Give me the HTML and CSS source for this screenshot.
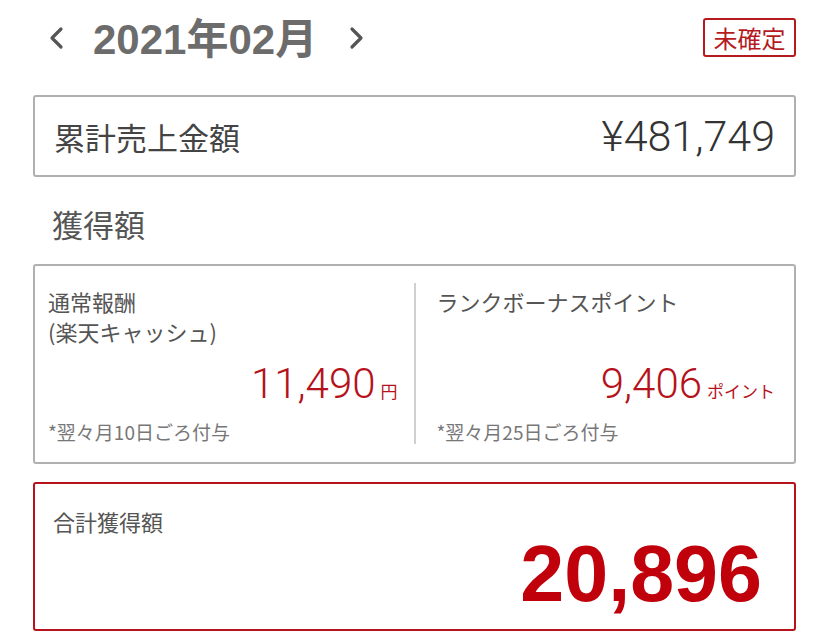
FILE: index.html
```html
<!DOCTYPE html>
<html lang="ja">
<head>
<meta charset="utf-8">
<link rel="stylesheet" href="styles.css">
</head>
<body>
<div class="page">
  <header class="top">
    <div class="month-nav">
      <svg class="chev" width="18" height="26" viewBox="0 0 18 26"><path d="M14 4 L5 13 L14 22" fill="none" stroke="#555" stroke-width="3.2" stroke-linecap="round" stroke-linejoin="round"/></svg>
      <h1 class="month">2021<span class="cjk">年</span>02<span class="cjk">月</span></h1>
      <svg class="chev" width="18" height="26" viewBox="0 0 18 26"><path d="M4 4 L13 13 L4 22" fill="none" stroke="#555" stroke-width="3.2" stroke-linecap="round" stroke-linejoin="round"/></svg>
    </div>
    <div class="badge">未確定</div>
  </header>

  <section class="card total-sales">
    <span class="ts-label">累計売上金額</span>
    <span class="ts-value">¥481,749</span>
  </section>

  <h2 class="section-title">獲得額</h2>

  <section class="card earn">
    <div class="col">
      <div class="col-label">通常報酬<br>(楽天キャッシュ)</div>
      <div class="col-value"><span class="num">11,490</span><span class="unit">円</span></div>
      <div class="col-note">*翌々月10日ごろ付与</div>
    </div>
    <div class="divider"></div>
    <div class="col col-right">
      <div class="col-label">ランクボーナスポイント</div>
      <div class="col-value"><span class="num">9,406</span><span class="unit">ポイント</span></div>
      <div class="col-note">*翌々月25日ごろ付与</div>
    </div>
  </section>

  <section class="card total">
    <div class="total-label">合計獲得額</div>
    <div class="total-value">20,896</div>
  </section>
</div>
</body>
</html>
```

FILE: styles.css
```css
* { box-sizing: border-box; }
html, body { margin: 0; padding: 0; background: #fff; }
body {
  font-family: "Noto Sans CJK JP", "Noto Sans", sans-serif;
  color: #444;
}
.page {
  width: 828px;
  padding: 0 32px 0 33px;
}
.top {
  height: 95px;
  display: flex;
  justify-content: space-between;
  align-items: flex-start;
}
.month-nav {
  display: flex;
  align-items: center;
  height: 76px;
  padding-left: 14px;
}
.chev { display: block; }
.month {
  margin: 0 31px 0 28px;
  font-family: "Liberation Sans", "Noto Sans CJK JP", sans-serif;
  font-weight: 700;
  font-size: 42px;
  line-height: 50px;
  color: #6c6c6c;
  letter-spacing: 0;
}
.month .cjk { font-family: "Noto Sans CJK JP", sans-serif; font-weight: 700; }
.badge {
  margin-top: 18px;
  width: 93px;
  height: 39px;
  border: 2px solid #b51a1f;
  border-radius: 3px;
  color: #b51a1f;
  font-size: 24px;
  line-height: 35px;
  text-align: center;
}
.card {
  border: 2px solid #b0b0b0;
  border-radius: 3px;
  background: #fff;
}
.total-sales {
  height: 82px;
  display: flex;
  align-items: center;
  justify-content: space-between;
  padding: 0 19px 0 19px;
}
.ts-label {
  font-size: 31px;
  font-weight: 400;
  color: #444;
}
.ts-value {
  font-family: "Roboto", "Liberation Sans", sans-serif;
  font-size: 43px;
  font-weight: 300;
  color: #333;
}
.section-title {
  margin: 0;
  height: 87px;
  display: flex;
  align-items: center;
  padding: 6px 0 0 19px;
  font-size: 31px;
  font-weight: 400;
  color: #555;
}
.earn {
  height: 200px;
  display: grid;
  grid-template-columns: 1fr 2px 1fr;
}
.divider {
  background: #d0d0d0;
  margin: 17px 0 18px;
  width: 2px;
}
.col {
  display: flex;
  flex-direction: column;
  padding: 20px 16px 18px 13px;
}
.col-right { padding: 20px 19px 18px 21px; }
.col-label {
  font-size: 22px;
  line-height: 30px;
  color: #555;
}
.col-value {
  margin-top: auto;
  display: flex;
  justify-content: flex-end;
  align-items: baseline;
  color: #b5121b;
}
.col-value .num {
  font-family: "Roboto", "Liberation Sans", sans-serif;
  font-weight: 300;
  font-size: 42px;
  line-height: 44px;
}
.col-value .unit {
  font-size: 17px;
  margin-left: 5px;
}
.col-note {
  margin-top: 14px;
  font-size: 19px;
  line-height: 24px;
  color: #777;
}
.total {
  margin-top: 18px;
  height: 149px;
  border-color: #b5121b;
  padding: 22px 32px 0 18px;
}
.total-label {
  font-size: 22px;
  line-height: 30px;
  color: #555;
}
.total-value {
  text-align: right;
  font-family: "Liberation Sans", sans-serif;
  font-weight: 700;
  font-size: 79px;
  line-height: 80px;
  color: #c0000b;
  margin-top: -2px;
}
```
